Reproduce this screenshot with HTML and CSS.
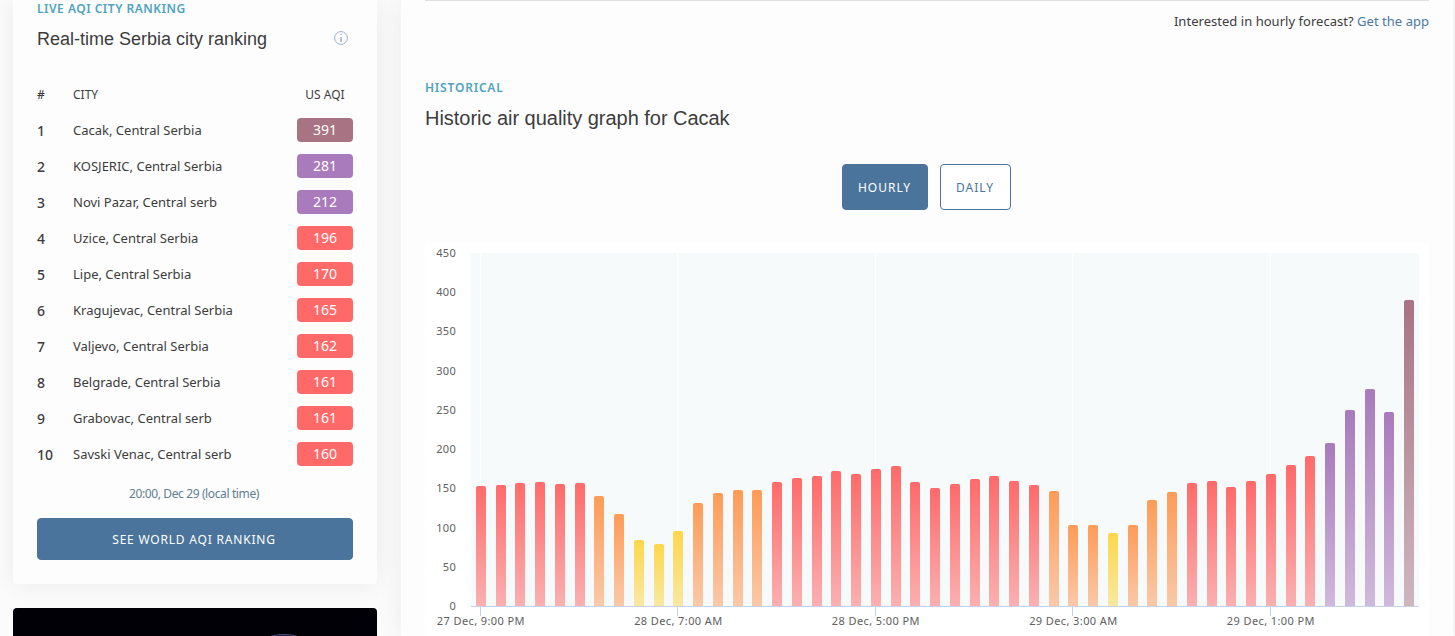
FILE: index.html
```html
<!DOCTYPE html>
<html lang="en">
<head>
    <meta charset="UTF-8">
    <meta name="viewport" content="width=device-width, initial-scale=1.0">
    <title>Cacak air quality</title>
    <link rel="stylesheet" href="styles.css">
</head>
<body>
    <div class="page">
        <aside class="sidebar">
            <section class="card">
                <p class="eyebrow tight">LIVE AQI CITY RANKING</p>
                <div class="title-row">
                    <h2>Real-time Serbia city ranking</h2>
                    <svg class="info" width="14" height="14" viewBox="0 0 14 14">
                        <circle cx="7" cy="7" r="6.4" fill="none" stroke="#9aafc5"/>
                        <path d="M6 3h2v1H6zM6 6h2v5H6z" fill="#b6c3d3"/>
                    </svg>
                </div>
                <div class="row head"><span>#</span><span class="city">CITY</span><span class="us">US AQI</span></div>
                <div class="row"><b>1</b><span class="city">Cacak, Central Serbia</span><span class="aqi maroon">391</span></div>
                <div class="row"><b>2</b><span class="city">KOSJERIC, Central Serbia</span><span class="aqi purple">281</span></div>
                <div class="row"><b>3</b><span class="city">Novi Pazar, Central serb</span><span class="aqi purple">212</span></div>
                <div class="row"><b>4</b><span class="city">Uzice, Central Serbia</span><span class="aqi red">196</span></div>
                <div class="row"><b>5</b><span class="city">Lipe, Central Serbia</span><span class="aqi red">170</span></div>
                <div class="row"><b>6</b><span class="city">Kragujevac, Central Serbia</span><span class="aqi red">165</span></div>
                <div class="row"><b>7</b><span class="city">Valjevo, Central Serbia</span><span class="aqi red">162</span></div>
                <div class="row"><b>8</b><span class="city">Belgrade, Central Serbia</span><span class="aqi red">161</span></div>
                <div class="row"><b>9</b><span class="city">Grabovac, Central serb</span><span class="aqi red">161</span></div>
                <div class="row"><b>10</b><span class="city">Savski Venac, Central serb</span><span class="aqi red">160</span></div>
                <p class="time">20:00, Dec 29 (local time)</p>
                <a class="btn world">SEE WORLD AQI RANKING</a>
            </section>
            <section class="earth">
                <svg width="60" height="28" viewBox="0 0 60 28">
                    <ellipse cx="30" cy="42" rx="28" ry="15.5" fill="#1c1a3c" stroke="#4c4c78"/>
                </svg>
            </section>
        </aside>

        <main class="content">
            <p class="forecast">Interested in hourly forecast? <a>Get the app</a></p>
            <p class="eyebrow">HISTORICAL</p>
            <h2 class="big">Historic air quality graph for Cacak</h2>
            <div class="tabs">
                <a class="btn hourly">HOURLY</a>
                <a class="btn daily">DAILY</a>
            </div>
            <div class="chart">
                <div class="y-axis">
                    <span>450</span><span>400</span><span>350</span><span>300</span><span>250</span>
                    <span>200</span><span>150</span><span>100</span><span>50</span><span>0</span>
                </div>
                <div class="plot" id="plot"></div>
                <div class="x-axis">
                    <span>27 Dec, 9:00 PM</span><span>28 Dec, 7:00 AM</span><span>28 Dec, 5:00 PM</span>
                    <span>29 Dec, 3:00 AM</span><span>29 Dec, 1:00 PM</span>
                </div>
            </div>
        </main>
    </div>

    <script>
        // Hourly US AQI values
        const values = [153, 154, 157, 158, 156, 157, 140, 117, 84, 79, 96, 131, 144, 148, 148, 158,
            163, 166, 172, 168, 175, 178, 158, 150, 156, 162, 166, 159, 154, 147, 103, 103,
            93, 103, 135, 145, 157, 159, 152, 159, 168, 180, 191, 208, 250, 277, 247, 390];
        const plot = document.getElementById("plot");

        function level(v) {
            if (v > 300) return "maroon";
            if (v > 200) return "purple";
            if (v >= 150) return "red";
            if (v > 100) return "orange";
            return "yellow";
        }

        values.forEach((v, i) => {
            const cell = document.createElement("div");
            cell.className = i % 10 === 0 ? "cell tick" : "cell";
            const bar = document.createElement("div");
            bar.className = "bar " + level(v);
            bar.style.height = Math.round(v * 353 / 450) + "px";
            cell.appendChild(bar);
            plot.appendChild(cell);
        });
    </script>
</body>
</html>
```
FILE: styles.css
```css
body {
    margin: 0;
    height: 636px;
    overflow: hidden;
    background: #fbfbfb;
    color: #3c3c3c;
    font-family: "Noto Sans", "Open Sans", sans-serif;
    font-size: 13px;
}

p, h2 {
    margin: 0;
}

.page {
    display: flex;
    gap: 24px;
    width: 1440px;
    height: 636px;
    padding-left: 13px;
}

.sidebar {
    display: flex;
    flex-direction: column;
    flex: none;
    gap: 24px;
    width: 364px;
}

.card {
    box-sizing: border-box;
    flex: none;
    height: 584px;
    padding: 0 24px;
    background: #fdfdfd;
    border-radius: 0 0 4px 4px;
    box-shadow: 0 0 24px rgba(0, 0, 0, 0.07);
}

.eyebrow {
    line-height: 18px;
    font-size: 12px;
    font-weight: 600;
    letter-spacing: 0.8px;
    color: #4fa3c0;
}

.tight {
    letter-spacing: 0.5px;
}

.title-row {
    display: flex;
    justify-content: space-between;
    align-items: center;
    height: 24px;
    margin-top: 8px;
    padding-right: 5px;
}

h2 {
    font-family: "Liberation Sans", Arial, sans-serif;
    font-size: 18px;
    font-weight: normal;
    line-height: 24px;
}

.title-row h2 {
    padding-top: 2px;
}

/* Ranking table */
.row {
    display: flex;
    align-items: center;
    height: 36px;
}

.row > :first-child {
    width: 36px;
    font-weight: 500;
}

.row b {
    font-size: 14px;
}

.row .city {
    flex: 1;
}

.head {
    margin-top: 26px;
    font-size: 12px;
}

.head .us {
    width: 56px;
    text-align: center;
}

.aqi {
    width: 56px;
    height: 24px;
    border-radius: 4px;
    line-height: 24px;
    text-align: center;
    font-size: 14px;
    color: #fff;
}

.aqi.maroon { background: #a87383; }
.aqi.purple { background: #a97abc; }
.aqi.red { background: #ff6a69; }

.time {
    margin-top: 13px;
    padding-right: 2px;
    line-height: 18px;
    text-align: center;
    font-size: 12px;
    letter-spacing: -0.38px;
    color: #607d92;
}

.btn {
    display: flex;
    box-sizing: border-box;
    align-items: center;
    justify-content: center;
    border: 1px solid #4a749b;
    border-radius: 4px;
    background: #4a749b;
    color: #fff;
    font-size: 12px;
    letter-spacing: 1px;
}

.world {
    height: 42px;
    margin-top: 15px;
    padding-right: 2px;
    letter-spacing: 0.8px;
}

.earth {
    flex: none;
    height: 60px;
    padding-left: 241px;
    background: #000006;
    border-radius: 4px 4px 0 0;
}

/* Main column */
.content {
    box-sizing: border-box;
    width: 1052px;
    padding: 0 24px;
    background: #fdfdfd;
    box-shadow: 0 0 24px rgba(0, 0, 0, 0.07);
}

.forecast {
    height: 78px;
    border-top: 1px solid #e0e0e0;
    line-height: 40px;
    text-align: right;
    letter-spacing: 0.03px;
}

.forecast a {
    color: #4a79a3;
}

.big {
    margin-top: 9px;
    font-size: 20px;
    letter-spacing: -0.03px;
}

.tabs {
    display: flex;
    justify-content: center;
    gap: 12px;
    height: 46px;
    margin-top: 34px;
    padding-right: 2px;
}

.hourly {
    width: 86px;
}

.daily {
    width: 71px;
    background: #fff;
    color: #4a749b;
}

/* Chart */
.chart {
    display: grid;
    grid-template-columns: 31px 948px;
    grid-template-rows: 370px 30px;
    column-gap: 15px;
    margin-top: 33px;
    background: #fff;
    font-size: 11px;
    line-height: 14px;
    color: #606060;
}

.y-axis {
    display: flex;
    flex-direction: column;
    justify-content: space-between;
    margin-top: 3px;
    text-align: right;
    letter-spacing: 0.3px;
}

.plot {
    display: grid;
    grid-template-columns: repeat(48, 19.75px);
    height: 353px;
    margin-top: 10px;
    background: #f6fafb;
    border-bottom: 1px solid #c5d3ea;
}

.cell {
    display: flex;
    position: relative;
    align-items: flex-end;
    padding-left: 4.9px;
}

/* Vertical grid line and the axis tick under it */
.tick::before,
.tick::after {
    content: "";
    position: absolute;
    top: 0;
    left: 8.8px;
    width: 1px;
    height: 353px;
    background: #fff;
}

.tick::after {
    top: 354px;
    height: 9px;
    background: #c5d3ea;
}

.bar {
    position: relative;
    width: 10px;
    border-radius: 2px 2px 0 0;
}

.bar.red { background: linear-gradient(#ff6a69, #fbb0b1); }
.bar.orange { background: linear-gradient(#ff9b57, #fac9a8); }
.bar.yellow { background: linear-gradient(#fdd74b, #f9e8a1); }
.bar.purple { background: linear-gradient(#a97abc, #d0b9dc); }
.bar.maroon { background: linear-gradient(#a87383, #cfb6bf); }

.x-axis {
    display: grid;
    grid-column: 1 / 3;
    grid-template-columns: repeat(5, 197.5px);
    margin-left: -42.9px;
    padding-top: 1px;
    text-align: center;
    letter-spacing: 0.4px;
}
```
